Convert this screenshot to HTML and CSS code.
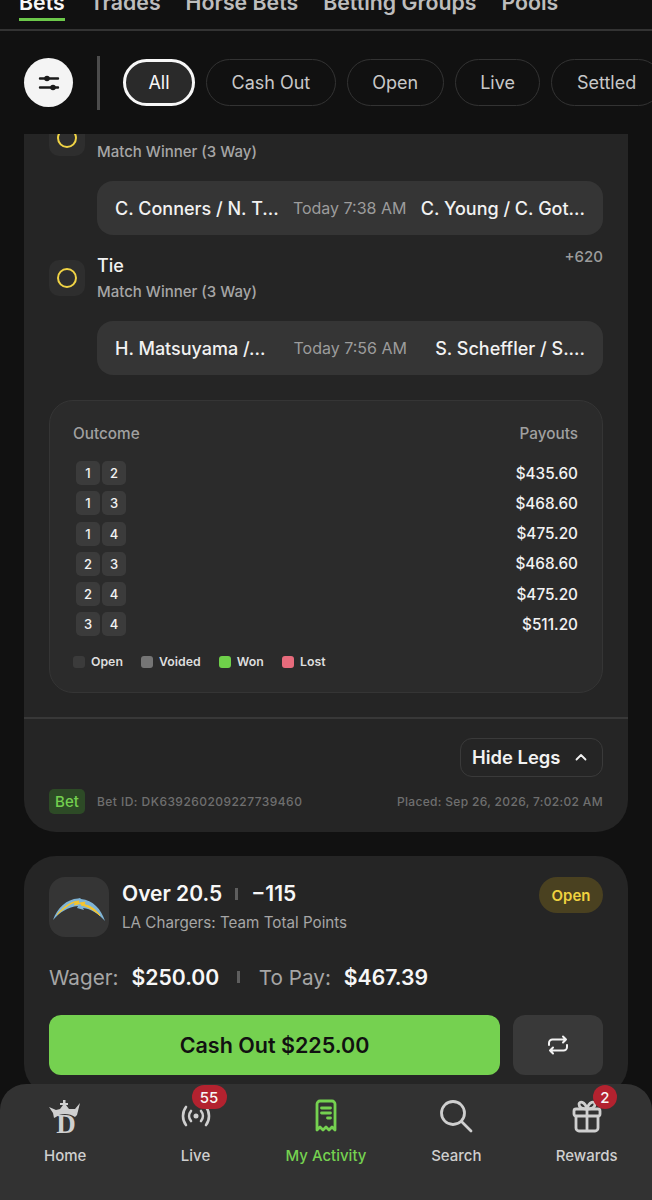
FILE: index.html
```html
<!DOCTYPE html>
<html>
<head>
  <title>My Activity</title>
  <link rel="stylesheet" href="styles.css">
</head>
<body>
<div class="page">

  <div class="tabs">
    <div class="tab active">Bets</div>
    <div class="tab">Trades</div>
    <div class="tab">Horse Bets</div>
    <div class="tab">Betting Groups</div>
    <div class="tab">Pools</div>
  </div>

  <div class="filters">
    <div class="filter-btn">
      <svg width="24" height="20" viewBox="0 0 24 20" fill="#1a1a1a" stroke="#1a1a1a" stroke-width="2.4" stroke-linecap="round">
        <path d="M3 5.500h18M3 14.500h18"/>
        <circle cx="10" cy="5.500" r="2.800" stroke="none"/>
        <circle cx="16" cy="14.500" r="2.800" stroke="none"/>
      </svg>
    </div>
    <div class="filter-sep"></div>
    <div class="pill selected">All</div>
    <div class="pill">Cash Out</div>
    <div class="pill">Open</div>
    <div class="pill">Live</div>
    <div class="pill">Settled</div>
  </div>

  <div class="feed">
    <div class="card first">
      <div class="leg">
        <div class="leg-icon"><span class="ring"></span></div>
        <div class="leg-text">
          <div class="leg-title">Draw</div>
          <div class="leg-sub">Match Winner (3 Way)</div>
        </div>
      </div>
      <div class="match">
        <span class="player">C. Conners / N. T...</span>
        <span class="when">Today 7:38 AM</span>
        <span class="player">C. Young / C. Got...</span>
      </div>

      <div class="leg second">
        <div class="leg-icon"><span class="ring"></span></div>
        <div class="leg-text">
          <div class="leg-title">Tie</div>
          <div class="leg-sub">Match Winner (3 Way)</div>
        </div>
        <div class="leg-odds">+620</div>
      </div>
      <div class="match">
        <span class="player">H. Matsuyama /...</span>
        <span class="when">Today 7:56 AM</span>
        <span class="player">S. Scheffler / S....</span>
      </div>

      <div class="outcomes">
        <div class="outcome-head"><span>Outcome</span><span>Payouts</span></div>
        <div class="outcome-row"><div class="chips"><b>1</b><b>2</b></div><span>$435.60</span></div>
        <div class="outcome-row"><div class="chips"><b>1</b><b>3</b></div><span>$468.60</span></div>
        <div class="outcome-row"><div class="chips"><b>1</b><b>4</b></div><span>$475.20</span></div>
        <div class="outcome-row"><div class="chips"><b>2</b><b>3</b></div><span>$468.60</span></div>
        <div class="outcome-row"><div class="chips"><b>2</b><b>4</b></div><span>$475.20</span></div>
        <div class="outcome-row"><div class="chips"><b>3</b><b>4</b></div><span>$511.20</span></div>
        <div class="legend">
          <div class="key"><i class="sw-open"></i>Open</div>
          <div class="key"><i class="sw-void"></i>Voided</div>
          <div class="key"><i class="sw-won"></i>Won</div>
          <div class="key"><i class="sw-lost"></i>Lost</div>
        </div>
      </div>

      <div class="card-rule"></div>

      <div class="hide-row">
        <div class="hide-btn">Hide Legs
          <svg width="12" height="8" viewBox="0 0 12 8" fill="none" stroke="#f2f2f2" stroke-width="1.8" stroke-linecap="round" stroke-linejoin="round"><path d="M1.500 6.500 6 2l4.500 4.500"/></svg>
        </div>
      </div>

      <div class="bet-foot">
        <span class="bet-tag">Bet</span>
        <span class="bet-id">Bet ID: DK639260209227739460</span>
        <span class="placed">Placed: Sep 26, 2026, 7:02:02 AM</span>
      </div>
    </div>

    <div class="card">
      <div class="bet-head">
        <div class="team-logo">
          <svg width="60" height="40" viewBox="0 0 60 40">
            <path d="M4 33C8 21 18 12 29 11.500l2-.5 1 1c12 1 20 10 24 22-7-8-14-12-22-13l1 2-7-2 1-2C19 20 11 25 4 33z" fill="#7fb4d6"/>
            <path d="M8 28C14 20 22 14.500 30 14l-1 2.500 7-1.500-1 2.500c7 1.500 12 5 16 11-7-6-12-9-19-10.500l.5-2-7 2 1-3C20 17 14 22 8 28z" fill="#f5c52e" stroke="#f5c52e" stroke-width="1"/>
          </svg>
        </div>
        <div class="bet-info">
          <div class="bet-title">Over 20.5<i class="tick"></i>−115</div>
          <div class="bet-market">LA Chargers: Team Total Points</div>
        </div>
        <div class="status">Open</div>
      </div>

      <div class="wager">
        <span class="lbl">Wager:</span><b>$250.00</b><i class="tick"></i><span class="lbl">To Pay:</span><b>$467.39</b>
      </div>

      <div class="actions">
        <div class="cashout">Cash Out $225.00</div>
        <div class="swap">
          <svg width="22" height="20" viewBox="0 0 22 20" fill="none" stroke="#f2f2f2" stroke-width="2" stroke-linecap="round" stroke-linejoin="round">
            <path d="M2 10V8a3.500 3.500 0 0 1 3.500-3.500H19M16 1.500l3 3-3 3"/>
            <path d="M20 10v2a3.500 3.500 0 0 1-3.500 3.500H3M6 12.500l-3 3 3 3"/>
          </svg>
        </div>
      </div>
    </div>
  </div>

  <div class="nav">
    <div class="nav-item">
      <svg class="nav-icon" width="36" height="36" viewBox="0 0 36 36">
        <path d="M2 9l7 3 4-1 3-4h-3V5h3V2h2.500v3H21v2h-2l3 4 6 0 5-6-3 12-2 2c-3-2-6-3-10-3-4 0-7 1-9 3l-2 1L6 15z" fill="#cfcfcf"/>
        <text x="19" y="35" text-anchor="middle" class="logo-d">D</text>
      </svg>
      <span>Home</span>
    </div>
    <div class="nav-item">
      <svg class="nav-icon" width="36" height="36" viewBox="0 0 36 36" fill="none" stroke="#cfcfcf" stroke-width="2.600" stroke-linecap="round">
        <path d="M8 9c-4 5-4 13 0 18M28 9c4 5 4 13 0 18M13 13c-2.500 3-2.500 7 0 10M23 13c2.500 3 2.500 7 0 10"/>
        <circle cx="18" cy="18" r="1.200" fill="#cfcfcf"/>
      </svg>
      <span>Live</span>
      <em class="count wide">55</em>
    </div>
    <div class="nav-item current">
      <svg class="nav-icon" width="36" height="36" viewBox="0 0 36 36" fill="none" stroke="#75d150" stroke-width="2.800" stroke-linejoin="round" stroke-linecap="round">
        <path d="M9 32V6a3 3 0 0 1 3-3h12a3 3 0 0 1 3 3v26l-3-3-3 3-3-3-3 3-3-3z"/>
        <path d="M13.500 10h9M13.500 15h9M19.500 20h3"/>
      </svg>
      <span>My Activity</span>
    </div>
    <div class="nav-item">
      <svg class="nav-icon" width="36" height="36" viewBox="0 0 36 36" fill="none" stroke="#cfcfcf" stroke-width="2.800" stroke-linecap="round">
        <circle cx="15" cy="15" r="11.500"/>
        <path d="M24 24l9 9"/>
      </svg>
      <span>Search</span>
    </div>
    <div class="nav-item">
      <svg class="nav-icon" width="36" height="36" viewBox="0 0 36 36" fill="none" stroke="#cfcfcf" stroke-width="2.800" stroke-linejoin="round">
        <rect x="5" y="11" width="26" height="7" rx="2"/>
        <path d="M7 18v12a3 3 0 0 0 3 3h16a3 3 0 0 0 3-3V18M18 11v22"/>
        <path d="M18 11c-4 0-8-1-8-5 0-3 6-3 8 5zM18 11c4 0 8-1 8-5 0-3-6-3-8 5z"/>
      </svg>
      <span>Rewards</span>
      <em class="count">2</em>
    </div>
  </div>

</div>
</body>
</html>
```

FILE: styles.css
```css
* {
  box-sizing: border-box;
}

body {
  margin: 0;
  font-family: Inter, "Liberation Sans", sans-serif;
  background: #111111;
  color: #f2f2f2;
}

.page {
  position: relative;
  width: 652px;
  height: 1200px;
  overflow: hidden;
  background: #111111;
  display: flex;
  flex-direction: column;
}

/* top tabs, scrolled partly out of view */
.tabs {
  flex: none;
  height: 31px;
  display: flex;
  gap: 25px;
  padding: 0 15px 0 19px;
  border-bottom: 2px solid #333333;
}

.tab {
  height: 30px;
  margin-top: -9px;
  font-size: 21.300px;
  line-height: 22px;
  font-weight: 600;
  color: #bdbdbd;
  white-space: nowrap;
}

.tab.active {
  color: #f7f7f7;
  border-bottom: 3px solid #6cc94a;
}

.filters {
  flex: none;
  height: 103px;
  display: flex;
  align-items: center;
  padding-left: 24px;
  white-space: nowrap;
}

.filter-btn {
  flex: none;
  width: 49px;
  height: 49px;
  border-radius: 50%;
  background: #f4f4f4;
  display: flex;
  align-items: center;
  justify-content: center;
}

.filter-sep {
  flex: none;
  width: 3px;
  height: 54px;
  margin: 0 23px 0 24px;
  background: #4c4c4c;
}

.pill {
  flex: none;
  height: 47px;
  padding: 0 24.500px;
  margin-right: 11px;
  border: 1.500px solid #333333;
  border-radius: 24px;
  display: flex;
  align-items: center;
  font-size: 18px;
  color: #c8c8c8;
}

.pill.selected {
  width: 72px;
  justify-content: center;
  padding: 0;
  border: 3px solid #f7f7f7;
  background: #2a2a2a;
  color: #f7f7f7;
}

.feed {
  flex: 1;
  min-height: 0;
  overflow: hidden;
  padding: 0 24px;
}

.card {
  background: #252525;
  border-radius: 32px;
  padding: 21px 25px;
  margin-bottom: 24px;
}

.card.first {
  margin-top: -14px;
  padding: 0 25px 18px;
  border-radius: 0 0 32px 32px;
  height: 712px;
}

.leg {
  display: flex;
  align-items: flex-start;
  height: 61px;
}

.leg.second {
  margin-top: 25px;
}

.leg-icon {
  flex: none;
  width: 36px;
  height: 36px;
  border-radius: 10px;
  background: #2e2e2e;
  display: flex;
  align-items: center;
  justify-content: center;
}

.ring {
  width: 20px;
  height: 20px;
  border-radius: 50%;
  border: 2px solid #f0d345;
}

.leg-text {
  flex: 1;
  margin-left: 12px;
}

.leg-title {
  font-size: 18px;
  line-height: 22px;
  font-weight: 500;
  color: #f2f2f2;
  margin-top: -5px;
}

.leg-sub {
  font-size: 15px;
  line-height: 18px;
  font-weight: 500;
  color: #a6a6a6;
  margin-top: 6px;
}

.leg-odds {
  font-size: 15px;
  line-height: 18px;
  font-weight: 500;
  color: #9c9c9c;
  margin-top: -12px;
}

.match {
  height: 54px;
  margin-left: 48px;
  padding: 0 18px;
  border-radius: 16px;
  background: #353535;
  display: flex;
  align-items: center;
  justify-content: space-between;
  white-space: nowrap;
}

.player {
  font-size: 18px;
  font-weight: 500;
  color: #f2f2f2;
}

.when {
  font-size: 16px;
  color: #9c9c9c;
}

.outcomes {
  height: 293px;
  margin-top: 25px;
  padding: 24px 24px 0 23px;
  border: 1px solid #353535;
  border-radius: 24px;
  background: #2b2b2b;
}

.outcome-head {
  display: flex;
  justify-content: space-between;
  font-size: 15.300px;
  line-height: 18px;
  font-weight: 500;
  color: #a0a0a0;
  margin-bottom: 18px;
}

.outcome-row {
  height: 24px;
  margin: 0 0 6.300px 3px;
  display: flex;
  align-items: center;
  justify-content: space-between;
  font-size: 15.300px;
  font-weight: 500;
  color: #f2f2f2;
}

.chips {
  display: flex;
  gap: 2px;
}

.chips b {
  width: 24px;
  height: 24px;
  border-radius: 5px;
  background: #3b3b3b;
  display: flex;
  align-items: center;
  justify-content: center;
  font-size: 13px;
  font-weight: 500;
}

.legend {
  display: flex;
  gap: 18.200px;
  margin-top: 18px;
  font-size: 12.300px;
  font-weight: 600;
  color: #dedede;
}

.key {
  display: flex;
  align-items: center;
  gap: 6px;
}

.key i {
  width: 12px;
  height: 12px;
  border-radius: 3px;
}

.sw-open { background: #3b3b3b; }
.sw-void { background: #757575; }
.sw-won { background: #6fd04a; }
.sw-lost { background: #e76b7c; }

.card-rule {
  height: 2px;
  margin: 24px -25px 0;
  background: #383838;
}

.hide-row {
  display: flex;
  justify-content: flex-end;
  margin-top: 19px;
}

.hide-btn {
  width: 143px;
  height: 39px;
  padding: 0 0 1px 11px;
  border: 1.500px solid #3a3a3a;
  border-radius: 12px;
  display: flex;
  align-items: center;
  gap: 15px;
  font-size: 18.400px;
  font-weight: 600;
  color: #f2f2f2;
}

.bet-foot {
  display: flex;
  align-items: center;
  margin-top: 12px;
  white-space: nowrap;
}

.bet-tag {
  width: 36px;
  height: 25px;
  border-radius: 5px;
  background: #2d4a26;
  display: flex;
  align-items: center;
  justify-content: center;
  font-size: 15px;
  font-weight: 500;
  color: #74d04f;
}

.bet-id {
  margin-left: 12px;
  font-size: 12px;
  font-weight: 500;
  letter-spacing: 0.45px;
  color: #6f6f6f;
}

.placed {
  margin-left: auto;
  font-size: 12px;
  font-weight: 500;
  letter-spacing: 0.33px;
  color: #6f6f6f;
}

.bet-head {
  display: flex;
  align-items: flex-start;
}

.team-logo {
  flex: none;
  width: 60px;
  height: 60px;
  border-radius: 16px;
  background: #353535;
  display: flex;
  align-items: center;
  justify-content: center;
}

.bet-info {
  flex: 1;
  margin-left: 13px;
}

.bet-title {
  font-size: 21px;
  line-height: 28px;
  font-weight: 600;
  color: #f7f7f7;
  margin-top: 3px;
  display: flex;
  align-items: center;
}

.tick {
  width: 3px;
  height: 12px;
  margin: 0 13px;
  background: #5e5e5e;
}

.bet-market {
  font-size: 15.200px;
  line-height: 20px;
  color: #a6a6a6;
  margin-top: 5px;
}

.status {
  width: 64px;
  height: 36px;
  border-radius: 18px;
  background: #4a4120;
  display: flex;
  align-items: center;
  justify-content: center;
  font-size: 15px;
  font-weight: 600;
  color: #efd23f;
}

.wager {
  display: flex;
  align-items: center;
  margin-top: 25px;
  height: 30px;
  font-size: 20.700px;
}

.lbl {
  color: #a6a6a6;
  margin-right: 13px;
}

.wager b {
  font-size: 21.200px;
  font-weight: 600;
  color: #f7f7f7;
}

.wager .tick {
  margin: 0 18.500px 0 18px;
}

.actions {
  display: flex;
  gap: 13px;
  margin-top: 23px;
}

.cashout {
  flex: 1;
  height: 60px;
  border-radius: 12px;
  background: #75d150;
  display: flex;
  align-items: center;
  justify-content: center;
  font-size: 21.500px;
  font-weight: 600;
  color: #111111;
}

.swap {
  flex: none;
  width: 90px;
  height: 60px;
  border-radius: 12px;
  background: #393939;
  display: flex;
  align-items: center;
  justify-content: center;
}

/* bottom bar sits over the feed */
.nav {
  position: absolute;
  left: 0;
  right: 0;
  bottom: 0;
  height: 116px;
  border-radius: 26px 26px 0 0;
  background: #323232;
  display: flex;
  justify-content: space-around;
}

.nav-item {
  position: relative;
  width: 130px;
  display: flex;
  flex-direction: column;
  align-items: center;
  padding-top: 14px;
  font-size: 15px;
  font-weight: 500;
  color: #cfcfcf;
}

.nav-item.current {
  color: #75d150;
}

.nav-icon {
  display: block;
  margin-bottom: 12px;
}

.logo-d {
  font-family: "Liberation Serif", serif;
  font-size: 27px;
  font-weight: 700;
  fill: #cfcfcf;
}

.count {
  position: absolute;
  top: 1px;
  left: 71px;
  min-width: 24px;
  height: 24px;
  border-radius: 12px;
  background: #b3222f;
  display: flex;
  align-items: center;
  justify-content: center;
  font-size: 15px;
  font-weight: 500;
  font-style: normal;
  color: #f7f7f7;
}

.count.wide {
  left: 61px;
  width: 35px;
}
```
